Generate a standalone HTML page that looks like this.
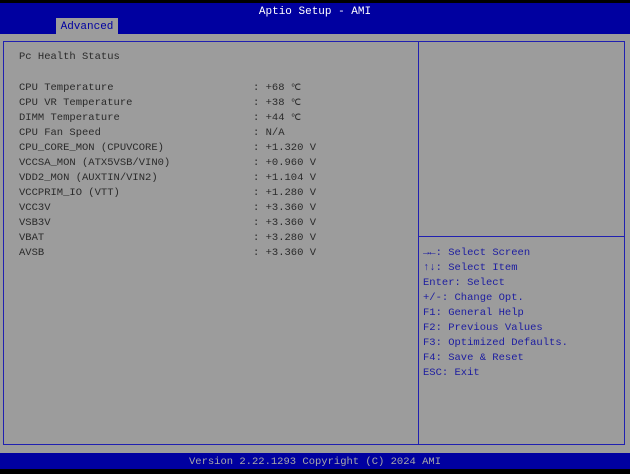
<html><head><style>
body{margin:0;width:630px;height:474px;background:#000;position:relative;overflow:hidden;font-family:"Liberation Mono","DejaVu Sans Mono",monospace;font-size:10.5px}
.hdr{position:absolute;left:0;top:3px;width:630px;height:31px;background:#0000a0}
.title{position:absolute;top:6px;left:0;width:630px;text-align:center;color:#fff;font-size:11px}
.tab{position:absolute;left:56px;top:18px;width:62px;height:16px;background:#9c9c9c;color:#0000a0;text-align:center;line-height:19px;font-size:11px}
.main{position:absolute;left:0;top:34px;width:630px;height:419px;background:#9c9c9c}
.box{position:absolute;left:3px;top:41px;width:620px;height:402px;border:1px solid #2020b0}
.div{position:absolute;left:418px;top:41px;width:1px;height:404px;background:#2020b0}
.hl{position:absolute;left:419px;top:236px;width:205px;height:1px;background:#2020b0}
.t{position:absolute;color:#2a2a2a;white-space:pre}
.h{position:absolute;color:#1c1ca0;white-space:pre;left:423px}
.foot{position:absolute;left:0;top:453px;width:630px;height:16px;background:#0000a0;color:#a8a8a8;text-align:center;line-height:18px;font-size:10.5px}
.c{font-size:9px}
</style></head><body>
<div class="hdr"></div><div class="title">Aptio Setup - AMI</div><div class="tab">Advanced</div>
<div class="main"></div><div class="box"></div><div class="div"></div><div class="hl"></div>
<div class="t" style="left:19px;top:51px">Pc Health Status</div>
<div class="t" style="left:19px;top:81px;line-height:15px">CPU Temperature
CPU VR Temperature
DIMM Temperature
CPU Fan Speed
CPU_CORE_MON (CPUVCORE)
VCCSA_MON (ATX5VSB/VIN0)
VDD2_MON (AUXTIN/VIN2)
VCCPRIM_IO (VTT)
VCC3V
VSB3V
VBAT
AVSB</div>
<div class="t" style="left:253px;top:81px;line-height:15px">: +68 <span class="c">℃</span>
: +38 <span class="c">℃</span>
: +44 <span class="c">℃</span>
: N/A
: +1.320 V
: +0.960 V
: +1.104 V
: +1.280 V
: +3.360 V
: +3.360 V
: +3.280 V
: +3.360 V</div>
<div class="h" style="top:246px;line-height:15px"><b>→←</b>: Select Screen
<b>↑↓</b>: Select Item
Enter: Select
+/-: Change Opt.
F1: General Help
F2: Previous Values
F3: Optimized Defaults.
F4: Save &amp; Reset
ESC: Exit</div>
<div class="foot">Version 2.22.1293 Copyright (C) 2024 AMI</div>
</body></html>
